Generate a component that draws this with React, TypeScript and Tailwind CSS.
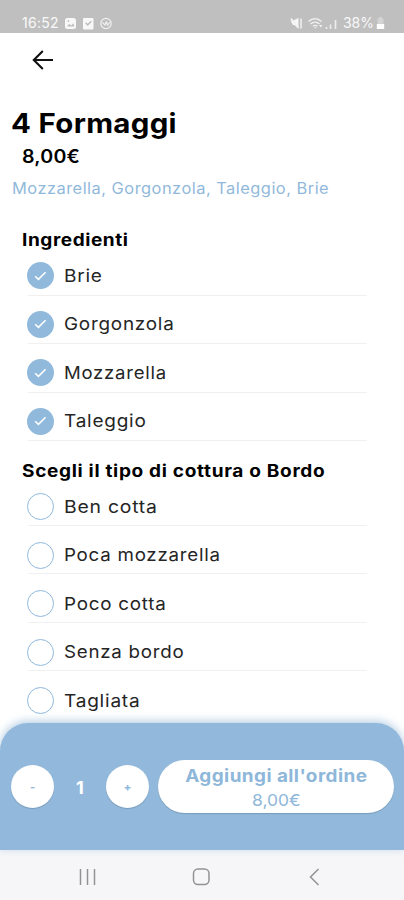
import { clsx } from 'clsx'

const ingredients = [
  { name: 'Brie', width: 'scale-x-[1.09]' },
  { name: 'Gorgonzola', width: 'scale-x-[1.08]' },
  { name: 'Mozzarella', width: 'scale-x-[1.06]' },
  { name: 'Taleggio', width: 'scale-x-[1.085]' },
]

const cookingOptions = [
  { name: 'Ben cotta', width: 'scale-x-[1.107]' },
  { name: 'Poca mozzarella', width: 'scale-x-[1.07]' },
  { name: 'Poco cotta', width: 'scale-x-[1.075]' },
  { name: 'Senza bordo', width: 'scale-x-[1.07]' },
  { name: 'Tagliata', width: 'scale-x-[1.09]' },
]

function StatusBar() {
  return (
    <div className="flex h-[33px] shrink-0 items-end justify-between bg-[#bfbfbf] pr-[19px] pb-[3px] pl-[22px] text-white">
      <div className="flex items-center">
        <span className="w-[43px] text-[14px] leading-[14px] tracking-[0.3px] opacity-90">16:52</span>
        <svg className="h-[13px] w-[48px]" viewBox="0 0 48 13" fill="none">
          <rect x="0" y="1" width="11" height="11" rx="2.5" fill="#f8f8f8" />
          <path d="M2 9.5l2.2-2.7 2 1.6 2-2.1L9.5 9.5z" fill="#bfbfbf" />
          <circle cx="3.4" cy="4" r="0.9" fill="#bfbfbf" />
          <rect x="18" y="1" width="10.5" height="11.5" rx="1" fill="#f8f8f8" />
          <path d="M20.6 5.8l2.1 2.1 3.6-3.6" stroke="#bfbfbf" strokeWidth="1.5" />
          <circle cx="41" cy="6.5" r="5.2" stroke="#f0f0f0" strokeWidth="1.2" />
          <path d="M37.5 5.5l2.5 2.5 1.3-3 1.4 3 2.3-3" stroke="#f0f0f0" strokeWidth="1.2" />
        </svg>
      </div>
      <div className="flex items-center">
        <svg className="mr-[4px] h-[13px] w-[49px]" viewBox="0 0 49 13" fill="none">
          <path d="M.5 3.5h3l5-2.5v11l-4-4H3z" fill="#f8f8f8" />
          <path d="M1 1.5l7.5 9M11 1.5v10" stroke="#f2f2f2" strokeWidth="1.5" />
          <path d="M18.5 4.5c4-3.7 9-3.7 13 0M20.5 7c3-2.5 6-2.5 9 0M23 9.3c1.5-1.2 3-1.2 4.5 0" stroke="#f2f2f2" strokeWidth="1.4" />
          <path d="M24 10.2l1.3 1.6 1.3-1.6zM29 8l1.7 2.4L32.4 8z" fill="#f2f2f2" />
          <path d="M36.5 10v2M40.5 7.5V12M45.5 3v9" stroke="#ededed" strokeWidth="1.7" />
        </svg>
        <span className="text-[14px] leading-[14px] opacity-90">38%</span>
        <svg className="ml-[2px] h-[12px] w-[9px]" viewBox="0 0 9 12">
          <path d="M3 0h3v1.5h1.5V7H1.5V1.5H3z" fill="#d4d4d4" />
          <path d="M.8 7h7.4v5H.8z" fill="#fff" />
        </svg>
      </div>
    </div>
  )
}

function OptionRow({ name, width, checked = false }: { name: string; width: string; checked?: boolean }) {
  return (
    <li className="group ml-[26.5px] flex h-[48.55px] w-[340px] flex-col justify-end">
      <div className="flex items-center">
        <span
          className={clsx(
            'flex size-[27px] shrink-0 items-center justify-center rounded-full',
            checked ? 'bg-[#91b9db]' : 'border-[1.5px] border-[#8fb9de]',
          )}
        >
          {checked && (
            <svg className="h-[10px] w-[13px]" viewBox="0 0 13 10" fill="none" stroke="#fff" strokeWidth="1.5">
              <path d="M1.2 5.2l3.2 3.2 7.2-7.2" />
            </svg>
          )}
        </span>
        <span
          className={clsx(
            'ml-[10px] origin-left text-[17.5px] leading-[22px] tracking-[0.7px] whitespace-nowrap text-[#252525]',
            width,
          )}
        >
          {name}
        </span>
      </div>
      <div className={clsx('ml-[1.5px] h-px bg-[#f0f0f0]', checked ? 'mt-[5.5px]' : 'mt-[4.5px] group-last:bg-transparent')} />
    </li>
  )
}

function AndroidNav() {
  return (
    <div className="flex h-[50px] shrink-0 items-center justify-center bg-[#f6f6f8]">
      <svg className="h-[50px] w-[404px]" viewBox="0 0 404 50" fill="none" stroke="#929294" strokeWidth="1.5">
        <path d="M80.5 19v16M87.5 19v16M94.5 19v16" />
        <rect x="193.5" y="19" width="15.5" height="15.5" rx="4.5" />
        <path d="M318.5 19l-8 8 8 8" />
      </svg>
    </div>
  )
}

export default function App() {
  return (
    <div className="flex h-[900px] w-[404px] flex-col overflow-hidden bg-white font-['Inter',sans-serif] text-black">
      <StatusBar />
      <main className="min-h-0 flex-1 overflow-hidden">
        <div className="flex h-[74px] pt-[15px] pl-[31px]">
          <svg className="size-[24px]" viewBox="0 0 24 24" fill="none" stroke="#111" strokeWidth="2.1">
            <path d="M11.8 3L2.8 12l9 9M3 12h19" />
          </svg>
        </div>
        <h1 className="ml-[11px] w-fit origin-left scale-x-[1.09] text-[27px] leading-[33px] font-bold tracking-[0.3px]">
          4 Formaggi
        </h1>
        <p className="ml-[22px] w-fit origin-left scale-x-[1.09] text-[18px] leading-[33px] font-semibold tracking-[0.2px]">
          8,00€
        </p>
        <p className="ml-[11.5px] w-fit origin-left scale-x-[1.06] text-[15.5px] leading-[32px] tracking-[0.45px] text-[#91b9db]">
          Mozzarella, Gorgonzola, Taleggio, Brie
        </p>

        <h2 className="mt-[24px] ml-[21.5px] w-fit origin-left scale-x-[1.12] text-[17px] leading-[22px] font-bold tracking-[0.5px]">
          Ingredienti
        </h2>
        <ul className="-mt-[4px]">
          {ingredients.map((item) => (
            <OptionRow key={item.name} {...item} checked />
          ))}
        </ul>

        <h2 className="mt-[18.5px] ml-[21.5px] w-fit origin-left scale-x-[1.12] text-[17px] leading-[22px] font-bold tracking-[0.6px]">
          Scegli il tipo di cottura o Bordo
        </h2>
        <ul className="-mt-[4.5px]">
          {cookingOptions.map((option) => (
            <OptionRow key={option.name} {...option} />
          ))}
        </ul>
      </main>

      <footer className="relative flex h-[127px] shrink-0 items-center rounded-t-[28px] bg-[#92b9db] pl-[11px] shadow-[0_-2px_8px_rgba(120,165,205,0.55)]">
        <button className="flex size-[43px] items-center justify-center rounded-full bg-white pt-[2px] text-[11px] font-bold text-[#91b9db] shadow-[0_1px_1px_rgba(80,110,140,0.4)]">
          -
        </button>
        <span className="w-[52px] pt-[2px] text-center text-[18px] font-bold text-white">1</span>
        <button className="flex size-[43px] items-center justify-center rounded-full bg-white pt-[2px] text-[11px] font-extrabold text-[#91b9db] shadow-[0_1px_1px_rgba(80,110,140,0.4)]">
          +
        </button>
        <button className="ml-[9px] flex h-[53px] w-[236px] flex-col items-center justify-center rounded-full bg-white text-[#8eb7da] shadow-[0_1px_1px_rgba(80,110,140,0.4)]">
          <span className="scale-x-[1.08] pt-[1px] text-[17.5px] leading-[25px] font-bold tracking-[0.4px]">
            Aggiungi all'ordine
          </span>
          <span className="scale-x-[1.09] text-[16px] leading-[24px]">8,00€</span>
        </button>
      </footer>
      <AndroidNav />
    </div>
  )
}
